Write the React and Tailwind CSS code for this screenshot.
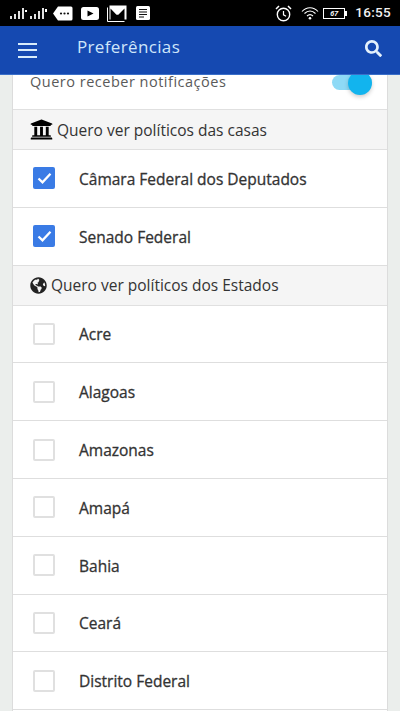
import React from "react";
import { FaUniversity, FaGlobeAmericas, FaSearch } from "react-icons/fa";

function Signal() {
  const h = [3, 5, 8, 11];
  return (
    <span className="flex items-end gap-[2px] h-[12px]">
      {h.map((v, i) => (
        <span key={i} className="w-[2px] bg-[#e0e0e0]" style={{ height: v }} />
      ))}
    </span>
  );
}

function StatusBar() {
  return (
    <div className="h-[26px] bg-black flex items-center text-white shrink-0">
      <div className="flex items-center ml-[10px]">
        <Signal />
        <span className="w-[2px] h-[2px] bg-white ml-[1px] mr-[3px] self-end mb-[7px]" />
        <Signal />
        <span className="w-[2px] h-[3px] bg-white ml-[1px] self-end mb-[7px]" />
      </div>
      <svg width="20" height="15" viewBox="0 0 20 15" className="ml-[6px]">
        <path d="M5 0.5h13a1.5 1.5 0 0 1 1.5 1.5v11a1.5 1.5 0 0 1-1.5 1.5H5L0 7.5z" fill="#fff" />
        <circle cx="8" cy="7.5" r="1.1" fill="#111" />
        <circle cx="11.5" cy="7.5" r="1.1" fill="#111" />
        <circle cx="15" cy="7.5" r="1.1" fill="#111" />
      </svg>
      <svg width="18" height="13" viewBox="0 0 18 13" className="ml-[8px]">
        <rect x="0" y="0" width="18" height="13" rx="2.5" fill="#fff" />
        <path d="M6.5 3.5v6l6-3z" fill="#000" />
      </svg>
      <svg width="20" height="17" viewBox="0 0 20 17" className="ml-[8px]">
        <path d="M0.5 2.5v14h17" fill="none" stroke="#fff" strokeWidth="1" />
        <path d="M2.5 0.5h17v14h-2V3.5l-6.2 6.2-1.8 0-6-6.2v11h-1z" fill="#fff" />
      </svg>
      <svg width="14" height="14" viewBox="0 0 14 14" className="ml-[9px]">
        <rect x="0" y="0" width="14" height="14" rx="1.5" fill="#fff" />
        <path d="M3 3.5h8M3 6h8M3 8.5h8M3 11h5" stroke="#111" strokeWidth="1.2" />
      </svg>
      <div className="ml-auto flex items-center">
        <svg width="17" height="17" viewBox="0 0 17 17">
          <circle cx="8.5" cy="9.5" r="6.2" fill="none" stroke="#fff" strokeWidth="1.4" />
          <path d="M8.5 6v3.8l2.6 1.4" fill="none" stroke="#fff" strokeWidth="1.2" />
          <path d="M1 4l3-3M16 4l-3-3" stroke="#fff" strokeWidth="1.5" />
        </svg>
        <svg width="18" height="14" viewBox="0 0 18 14" className="ml-[9px]">
          <path d="M1 5.5C5.5 0.5 12.5 0.5 17 5.5M3.5 7.5C6.8 4.3 11.2 4.3 14.5 7.5M6 10c1.8-1.7 4.2-1.7 6 0" fill="none" stroke="#fff" strokeWidth="1.1" />
          <circle cx="9" cy="12.3" r="1.3" fill="#fff" />
        </svg>
        <div className="ml-[4px] w-[22px] h-[11px] border border-white flex items-center justify-center text-[7px] leading-none font-bold italic font-['Liberation_Sans',sans-serif]">67</div>
        <span className="w-[2px] h-[5px] bg-white mr-[8px]" />
        <span className="text-[13.5px] leading-none font-medium tracking-[0.3px] mr-[9px] font-['Roboto',sans-serif] text-[#f2f2f2]">16:55</span>
      </div>
    </div>
  );
}

function Header() {
  return (
    <div className="h-[49px] bg-[#1549b1] flex items-center shrink-0 border-b border-[#3a6fc9]">
      <div className="ml-[18px] w-[19px] flex flex-col gap-[4.5px]">
        <span className="h-[2px] bg-[#d8ecfb]" />
        <span className="h-[2px] bg-[#d8ecfb]" />
        <span className="h-[2px] bg-[#d8ecfb]" />
      </div>
      <span className="ml-[40px] mb-[6px] text-[17px] text-[#cfe6fa] tracking-[0.35px]">Preferências</span>
      <FaSearch className="ml-auto mr-[18px] mb-[4px] text-[#e4f1fc]" size={17} />
    </div>
  );
}

function Section({ icon, children, h }) {
  return (
    <div className={`flex items-center pl-[17px] bg-[#f5f5f5] border-b border-[#e0e0e0] text-[15.5px] text-[#333] ${h}`}>
      {icon}
      <span className="pt-[2px]">{children}</span>
    </div>
  );
}

function Row({ label, checked }) {
  return (
    <div className="h-[57.8px] flex items-center pl-[20px] border-b border-[#dedede] bg-white">
      {checked ? (
        <span className="w-[22px] h-[22px] rounded-[2px] bg-[#3a7be5] flex items-center justify-center">
          <svg width="15" height="12" viewBox="0 0 15 12">
            <path d="M1.5 6.5l4 3.8L13.5 1.8" fill="none" stroke="#fff" strokeWidth="2.3" />
          </svg>
        </span>
      ) : (
        <span className="w-[22px] h-[22px] rounded-[2px] border-2 border-[#e0e0e0] bg-white" />
      )}
      <span className="ml-[24px] text-[15.5px] font-medium pt-[2px] text-[#333] [-webkit-text-stroke:0.3px_#333]">{label}</span>
    </div>
  );
}

export default function App() {
  return (
    <div className="w-[400px] h-[711px] overflow-hidden flex flex-col bg-[#ebeeec] font-['Open_Sans',sans-serif]">
      <StatusBar />
      <Header />
      <div className="mx-[12px] flex-1 min-h-0 bg-white border-x border-[#dcdcdc] overflow-hidden">
        <div className="h-[35px] pl-[17px] pr-[15px] flex items-start justify-between border-b border-[#e0e0e0]">
          <span className="text-[14.5px] leading-[14px] text-[#5a5a5a] tracking-[0.5px]">Quero receber notificações</span>
          <span className="relative w-[40px] h-[15px] rounded-full bg-[#8edaf6]">
            <span className="absolute right-0 top-[-4px] w-[24px] h-[24px] rounded-full bg-[#12b4ee] shadow-[0_2px_4px_rgba(0,0,0,0.2)]" />
          </span>
        </div>
        <Section h="h-[40px]" icon={<FaUniversity className="text-black mr-[4px]" size={23} />}>
          Quero ver políticos das casas
        </Section>
        <Row label="Câmara Federal dos Deputados" checked />
        <Row label="Senado Federal" checked />
        <Section h="h-[40px]" icon={<FaGlobeAmericas className="text-[#222] mr-[4px]" size={17} />}>
          Quero ver políticos dos Estados
        </Section>
        <Row label="Acre" />
        <Row label="Alagoas" />
        <Row label="Amazonas" />
        <Row label="Amapá" />
        <Row label="Bahia" />
        <Row label="Ceará" />
        <Row label="Distrito Federal" />
      </div>
    </div>
  );
}
